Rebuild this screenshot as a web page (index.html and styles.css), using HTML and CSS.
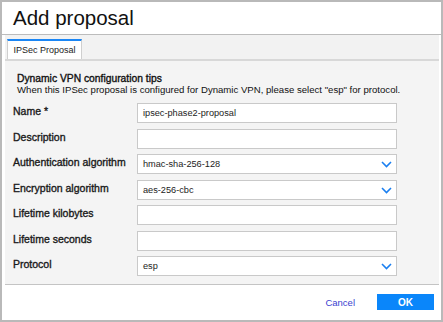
FILE: index.html
```html
<!DOCTYPE html>
<html lang="en">
<head>
    <meta charset="UTF-8">
    <title>Add proposal</title>
    <link rel="stylesheet" href="styles.css">
</head>
<body>
    <div class="dialog">
        <div class="dialog-header">
            <h1>Add proposal</h1>
        </div>

        <div class="dialog-body">
            <div class="tabs">
                <div class="tab active">IPSec Proposal</div>
            </div>

            <div class="panel">
                <div class="tips">
                    <div class="tips-title">Dynamic VPN configuration tips</div>
                    <div class="tips-text">When this IPSec proposal is configured for Dynamic VPN, please select "esp" for protocol.</div>
                </div>

                <div class="form">
                    <label>Name *</label>
                    <div class="field">ipsec-phase2-proposal</div>

                    <label>Description</label>
                    <div class="field"></div>

                    <label>Authentication algorithm</label>
                    <div class="field select">hmac-sha-256-128
                        <svg class="chevron" width="11" height="7" viewBox="0 0 11 7"><path d="M1 1 L5.5 5.5 L10 1" fill="none" stroke="#1a7ff0" stroke-width="1.6"/></svg>
                    </div>

                    <label>Encryption algorithm</label>
                    <div class="field select">aes-256-cbc
                        <svg class="chevron" width="11" height="7" viewBox="0 0 11 7"><path d="M1 1 L5.5 5.5 L10 1" fill="none" stroke="#1a7ff0" stroke-width="1.6"/></svg>
                    </div>

                    <label>Lifetime kilobytes</label>
                    <div class="field"></div>

                    <label>Lifetime seconds</label>
                    <div class="field"></div>

                    <label>Protocol</label>
                    <div class="field select">esp
                        <svg class="chevron" width="11" height="7" viewBox="0 0 11 7"><path d="M1 1 L5.5 5.5 L10 1" fill="none" stroke="#1a7ff0" stroke-width="1.6"/></svg>
                    </div>
                </div>
            </div>
        </div>

        <div class="dialog-footer">
            <a href="#" class="cancel">Cancel</a>
            <button class="ok">OK</button>
        </div>
    </div>
</body>
</html>
```

FILE: styles.css
```css
body {
    margin: 0;
    font-family: 'Liberation Sans', Arial, sans-serif;
    background-color: #fff;
}

.dialog {
    width: 443px;
    height: 322px;
    box-sizing: border-box;
    border: 2px solid #b9b9b9;
    display: flex;
    flex-direction: column;
}

.dialog-header {
    height: 32px;
    border-bottom: 1px solid #bcbcbc;
    padding-left: 11px;
}

h1 {
    margin: 0;
    font-size: 20.5px;
    font-weight: normal;
    color: #111;
    line-height: 32px;
}

.dialog-body {
    padding: 0 2px 0 3px;
}

.tabs {
    height: 22px;
    background-color: #f2f2f2;
    border-bottom: 2px solid #d8d8d8;
    padding: 2px 0 0 2px;
    display: flex;
    align-items: flex-end;
}

.tab {
    height: 18px;
    width: 73px;
    background-color: #fff;
    border-top: 2px solid #1a86f5;
    border-left: 1px solid #cfcfcf;
    border-right: 1px solid #cfcfcf;
    font-size: 9px;
    line-height: 19px;
    color: #222;
    text-align: center;
}

.panel {
    background-color: #f4f4f4;
    padding: 12px 0 8px 8px;
    border-bottom: 1px solid #c4c4c4;
}

.tips {
    margin-left: 4px;
    line-height: 11px;
    color: #111;
}

.tips-title {
    font-size: 10.3px;
    -webkit-text-stroke: 0.35px #111;
}

.tips-text {
    font-size: 9.6px;
}

.form {
    margin-top: 8px;
    display: grid;
    grid-template-columns: 124px 260px;
    grid-auto-rows: 20px;
    row-gap: 5.5px;
}

label {
    font-size: 10.5px;
    color: #1a1a1a;
    -webkit-text-stroke: 0.35px #1a1a1a;
    line-height: 16px;
    white-space: nowrap;
}

.field {
    box-sizing: border-box;
    height: 20px;
    border: 1px solid #c9c9c9;
    background-color: #fff;
    font-size: 9.2px;
    line-height: 18px;
    padding-left: 5px;
    color: #222;
    position: relative;
}

.chevron {
    position: absolute;
    right: 4px;
    top: 6px;
}

.dialog-footer {
    flex: 1;
    display: flex;
    justify-content: flex-end;
    align-items: flex-start;
    padding: 9px 7px 0 0;
}

.cancel {
    font-size: 9.5px;
    color: #3b3fd0;
    text-decoration: none;
    margin: 3px 22px 0 0;
}

.ok {
    width: 57px;
    height: 16px;
    border: none;
    padding: 0;
    background-color: #0a86fa;
    color: #fff;
    font-family: 'Liberation Sans', Arial, sans-serif;
    font-size: 10px;
    font-weight: bold;
}
```
